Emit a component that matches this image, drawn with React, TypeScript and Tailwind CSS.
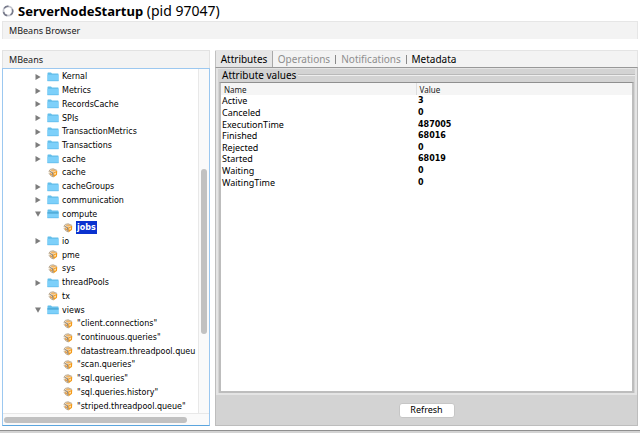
import { useState } from "react";

type Node = { label: string; kind: "closed" | "open" | "bean"; deep?: boolean };

const nodes: Node[] = [
  { label: "Kernal", kind: "closed" },
  { label: "Metrics", kind: "closed" },
  { label: "RecordsCache", kind: "closed" },
  { label: "SPIs", kind: "closed" },
  { label: "TransactionMetrics", kind: "closed" },
  { label: "Transactions", kind: "closed" },
  { label: "cache", kind: "closed" },
  { label: "cache", kind: "bean" },
  { label: "cacheGroups", kind: "closed" },
  { label: "communication", kind: "closed" },
  { label: "compute", kind: "open" },
  { label: "jobs", kind: "bean", deep: true },
  { label: "io", kind: "closed" },
  { label: "pme", kind: "bean" },
  { label: "sys", kind: "bean" },
  { label: "threadPools", kind: "closed" },
  { label: "tx", kind: "bean" },
  { label: "views", kind: "open" },
  { label: '"client.connections"', kind: "bean", deep: true },
  { label: '"continuous.queries"', kind: "bean", deep: true },
  { label: '"datastream.threadpool.queu', kind: "bean", deep: true },
  { label: '"scan.queries"', kind: "bean", deep: true },
  { label: '"sql.queries"', kind: "bean", deep: true },
  { label: '"sql.queries.history"', kind: "bean", deep: true },
  { label: '"striped.threadpool.queue"', kind: "bean", deep: true },
];

const attributes = [
  ["Active", "3"],
  ["Canceled", "0"],
  ["ExecutionTime", "487005"],
  ["Finished", "68016"],
  ["Rejected", "0"],
  ["Started", "68019"],
  ["Waiting", "0"],
  ["WaitingTime", "0"],
];

function Arrow({ open }: { open: boolean }) {
  return (
    <svg viewBox="0 0 6 6" className="size-[6px]" aria-hidden="true">
      <path d={open ? "M0 0.5H6L3 5.7Z" : "M0.5 0L5.7 3L0.5 6Z"} fill="#7d7d7d" />
    </svg>
  );
}

function Folder({ open }: { open: boolean }) {
  return (
    <svg viewBox="0 0 12 10" className="h-[10px] w-[12px] shrink-0" aria-hidden="true">
      <path d="M0.5 1.2Q0.5 0.6 1.1 0.6H4L5 1.6H11Q11.5 1.6 11.5 2.2V9H0.5Z" fill="#62bde9" />
      <path d="M0.5 2.8H11.5V8.6Q11.5 9 11 9H1Q0.5 9 0.5 8.6Z" fill="#7dd0fa" />
      {open && <path d="M0.5 3.2H11.5V4.6H0.5Z" fill="#48a5d3" />}
      <path d="M0.5 8.8H11.5" stroke="#55b4e5" strokeWidth="0.6" />
    </svg>
  );
}

function Bean() {
  return (
    <svg viewBox="0 0 10 10" className="size-[10px] shrink-0" aria-hidden="true">
      <path d="M0.6 3L2.4 1.2L5.2 0.6L9.2 2.4L9 6.8L5.8 9.3L2.8 8L0.8 5.6Z" fill="#f3e6d0" />
      <path d="M5.2 4.4L9.2 2.8L9 6.8L5.6 9.3Z" fill="#f59a18" />
      <path d="M2.4 2.3L5.2 1.2L8.4 2.4L5 3.7Z" fill="#f2b565" />
      <path d="M0.8 3.4L2.4 1.3L5.2 0.8L9 2.4M1 5.2L2.8 7.8L5.4 9" fill="none" stroke="#a3927b" strokeWidth="0.7" />
      <path d="M1.6 3.4L4.6 4.7L5 8.4" fill="none" stroke="#6b5b48" strokeWidth="0.8" />
      <path d="M2 5L3.8 5.8V7.4L2.4 6.7Z" fill="#e08a26" />
      <path d="M6.4 5.1L7.8 4.5V6.2L6.5 7Z" fill="#fff2d2" />
    </svg>
  );
}

function TreeRow({ node, selected, onSelect }: { node: Node; selected: boolean; onSelect: () => void }) {
  return (
    <li className={"flex min-h-0 flex-1 items-center " + (node.deep ? "pl-[47px]" : "pl-[32px]")}>
      <span className="flex w-[12px] shrink-0">
        {node.kind !== "bean" && <Arrow open={node.kind === "open"} />}
      </span>
      <span className="flex w-[12px] shrink-0 justify-center">
        {node.kind === "bean" ? <Bean /> : <Folder open={node.kind === "open"} />}
      </span>
      <button
        type="button"
        onClick={onSelect}
        className={
          "ml-[2px] px-px text-left leading-[13px] whitespace-nowrap " +
          (selected ? "bg-[#0a32cf] font-bold text-white" : "")
        }
      >
        {node.label}
      </button>
    </li>
  );
}

export default function App() {
  const [selected, setSelected] = useState(11);
  return (
    <div className="flex h-screen flex-col overflow-hidden bg-white font-['Noto_Sans','Open_Sans',sans-serif] text-[9px] text-[#202020]">
      <h1 className="flex h-[21px] shrink-0 items-center gap-1 pl-[2px] text-[14px] leading-[20px] text-black">
        <svg viewBox="0 0 12 12" className="size-[12px]" aria-hidden="true">
          <circle cx="6" cy="6" r="4.6" fill="none" stroke="#c4c6cf" strokeWidth="1.8" />
          <path d="M2.2 3.4A4.6 4.6 0 0 1 6.5 1.4M10.3 4.2A4.6 4.6 0 0 1 8.5 9.9M5.2 10.6A4.6 4.6 0 0 1 1.5 7" fill="none" stroke="#777a8a" strokeWidth="1.5" />
        </svg>
        <span><b className="text-[13px]">ServerNodeStartup</b> (pid 97047)</span>
      </h1>
      <div className="mr-[2px] ml-[2px] flex h-[18px] shrink-0 items-center border-t border-r border-l border-[#e6e6e6] bg-[#f3f3f3] pl-[6px]">
        MBeans Browser
      </div>

      <main className="mt-[11px] mr-[2px] ml-[2px] flex min-h-0 flex-1 gap-[5px]">
        <section className="flex w-[208px] shrink-0 flex-col">
          <h2 className="flex h-[18px] shrink-0 items-center border-t border-r border-l border-[#e2e2e2] bg-[#f3f3f3] pl-[6px]">
            MBeans
          </h2>
          <div className="flex min-h-0 flex-1 flex-col border border-[#9cc8f0] border-b-[#5ba5de]">
            <div className="flex min-h-0 flex-1">
              <ul className="flex min-w-0 flex-1 flex-col overflow-hidden pt-px font-['DejaVu_Sans',sans-serif] text-[8px] text-black">
                {nodes.map((n, i) => (
                  <TreeRow key={i} node={n} selected={selected === i} onSelect={() => setSelected(i)} />
                ))}
              </ul>
              <div className="flex w-[11px] shrink-0 flex-col items-center border-l border-[#e8e8e8] bg-[#fafafa] pt-[100px]">
                <div className="h-[165px] w-[6px] rounded-full bg-[#c1c1c1]" />
              </div>
            </div>
            <div className="flex h-[12px] shrink-0 items-center border-t border-[#e8e8e8] bg-[#fafafa] pl-[1px]">
              <div className="h-[6px] w-[183px] rounded-full bg-[#c1c1c1]" />
            </div>
          </div>
        </section>

        <section className="flex min-w-0 flex-1 flex-col">
          <div role="tablist" className="flex h-[17px] shrink-0 items-center border-t border-r border-[#e4e4e4] bg-[#f3f3f3] text-[10px] leading-[16px]">
            <button role="tab" aria-selected="true" type="button" className="h-[17px] w-[58px] shrink-0 border-r border-l border-r-[#a8a8a8] border-l-[#c0c0c0] bg-[#e6e6e6] text-black">
              Attributes
            </button>
            <button role="tab" aria-selected="false" type="button" className="w-[62px] text-[#8e8e8e]">Operations</button>
            <span className="h-[9px] w-px bg-[#8a8a8a]" />
            <button role="tab" aria-selected="false" type="button" className="w-[70px] text-[#8e8e8e]">Notifications</button>
            <span className="h-[9px] w-px bg-[#8a8a8a]" />
            <button role="tab" aria-selected="false" type="button" className="w-[54px] text-black">Metadata</button>
          </div>
          <div className="flex min-h-0 flex-1 flex-col border border-[#bdbdbd] border-t-[#989898] bg-[#d3d3d3]">
            <div className="flex min-h-0 flex-1 flex-col border-2 border-t border-[#e4e4e4]">
              <h3 className="mb-[2px] flex h-[11px] shrink-0 items-center gap-[2px] pl-[4px] text-[10px] leading-[12px] text-black">
                Attribute values
                <span className="h-[2px] flex-1 border-t border-[#b9b9b9] bg-[#eeeeee]" />
              </h3>
              <div className="mx-px min-h-0 flex-1 border-2 border-t border-[#bdbdbd] border-t-[#8f8f8f] bg-white">
                <table className="w-full table-fixed border-collapse text-left leading-[11px]">
                  <thead>
                    <tr className="h-[12px] bg-[#f5f5f5] text-[8px]">
                      <th className="w-[195px] border-r border-[#dedede] p-0 pl-[3px] font-normal">Name</th>
                      <th className="p-0 pl-[3px] font-normal">Value</th>
                    </tr>
                  </thead>
                </table>
                <table className="h-[93px] w-full table-fixed border-collapse text-left leading-[11px] text-black">
                  <tbody>
                    {attributes.map(([name, value]) => (
                      <tr key={name}>
                        <td className="w-[195px] p-0 pl-px">{name}</td>
                        <td className="p-0 pl-[2px] font-['DejaVu_Sans',sans-serif] text-[8px] font-bold">{value}</td>
                      </tr>
                    ))}
                  </tbody>
                </table>
              </div>
            </div>
            <div className="flex h-[30px] shrink-0 items-center justify-center">
              <button type="button" className="h-[15px] w-[56px] rounded-[3px] border border-[#c6c6c6] bg-white leading-[12px] text-black">
                Refresh
              </button>
            </div>
          </div>
        </section>
      </main>
      <footer className="mt-[4px] h-[3px] shrink-0 border-t border-[#8f8f8f] bg-[#d3d3d3]" />
    </div>
  );
}
